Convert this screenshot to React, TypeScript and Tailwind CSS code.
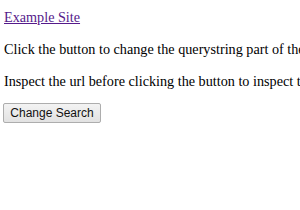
import React from 'react';

export default function App() {
  const changeSearch = () => {};

  return (
    <div className="min-h-[210px] bg-white px-[4px] pt-[9px] text-[14.2px] leading-[16px] text-black whitespace-nowrap overflow-hidden [font-family:'Liberation_Serif',serif]">
      <a href="#" className="text-[#551a8b] underline">
        Example Site
      </a>
      <p className="mt-[16px]">Click the button to change the querystring part of the URL.</p>
      <p className="mt-[16px]">Inspect the url before clicking the button to inspect the change.</p>
      <button
        onClick={changeSearch}
        className="ml-[-1px] mt-[14px] h-[20px] w-[98px] border border-[#adadad] rounded-[2px] bg-gradient-to-b from-[#f3f3f3] to-[#e2e2e2] text-[12px] leading-[18px] text-[#111] [font-family:'Liberation_Sans',sans-serif]"
      >
        Change Search
      </button>
    </div>
  );
}
